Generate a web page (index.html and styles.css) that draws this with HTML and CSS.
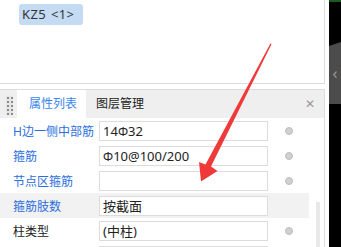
FILE: index.html
```html
<!DOCTYPE html>
<html lang="zh-CN">
  <head>
    <meta charset="UTF-8" />
    <title>属性列表</title>
    <link rel="stylesheet" href="styles.css">
  </head>
  <body>
    <div class="screen">
      <div class="main">
        <div class="canvas-area">
          <span class="tag">KZ5 &lt;1&gt;</span>
        </div>

        <div class="panel">
          <div class="panel-head">
            <div class="handle"></div>
            <div class="tab active">属性列表</div>
            <div class="tab">图层管理</div>
            <div class="close">&#x2715;</div>
          </div>

          <div class="panel-body">
            <div class="rows">
              <div class="row">
                <span class="label blue">H边一侧中部筋</span>
                <span class="field">14<span class="bar">Φ</span>32</span>
                <span class="dot"></span>
              </div>
              <div class="row">
                <span class="label blue">箍筋</span>
                <span class="field"><span class="bar">Φ</span>10@100/200</span>
                <span class="dot"></span>
              </div>
              <div class="row">
                <span class="label blue">节点区箍筋</span>
                <span class="field"></span>
                <span class="dot"></span>
              </div>
              <div class="row current">
                <span class="label blue">箍筋肢数</span>
                <span class="field">按截面</span>
                <span class="no-dot"></span>
              </div>
              <div class="row">
                <span class="label">柱类型</span>
                <span class="field">(中柱)</span>
                <span class="dot"></span>
              </div>
              <div class="row">
                <span class="label"></span>
                <span class="field"></span>
                <span class="dot"></span>
              </div>
            </div>
            <div class="scroll">
              <div class="thumb"></div>
            </div>
          </div>
        </div>
      </div>

      <div class="side">
        <div class="side-gap"></div>
        <div class="side-dark">
          <div class="side-fold">&lsaquo;</div>
        </div>
      </div>
    </div>

    <!-- red annotation arrow -->
    <svg class="arrow" width="341" height="247" viewBox="0 0 341 247">
      <polygon
        fill="#f03a3a"
        points="271.6,44 211,166.5 217.5,171 201,181.5 199,162 205.5,164.5 270.4,43.6"
      />
    </svg>
  </body>
</html>
```

FILE: styles.css
```css
body {
  margin: 0;
  padding: 0;
  font-family: "Noto Sans", "Noto Sans CJK SC", sans-serif;
  font-size: 12px;
  color: #222;
  background-color: #fff;
  overflow: hidden;
}
.screen {
  display: flex;
  width: 341px;
  height: 247px;
  overflow: hidden;
}
.main {
  width: 325px;
  display: flex;
  flex-direction: column;
}
.canvas-area {
  height: 84px;
  border-right: 1px solid #dcdcdc;
  border-bottom: 1px solid #dcdcdc;
  padding: 4px 0 0 19px;
  box-sizing: border-box;
  flex-shrink: 0;
}
.tag {
  display: inline-block;
  width: 64px;
  height: 21px;
  line-height: 21px;
  padding-left: 3px;
  box-sizing: border-box;
  background-color: #c4dbf3;
  border-radius: 3px;
  font-size: 13px;
  letter-spacing: 0.4px;
  word-spacing: 1px;
  color: #333;
  white-space: nowrap;
}
.panel {
  margin-top: 5px;
  border-top: 1px solid #dcdcdc;
  border-right: 1px solid #dcdcdc;
  flex: 1;
  display: flex;
  flex-direction: column;
}
.panel-head {
  height: 28px;
  background-color: #efefef;
  display: flex;
  align-items: stretch;
  flex-shrink: 0;
}
.handle {
  width: 17px;
  background-color: #e6e6e6;
  background-image: radial-gradient(circle, #8a8a8a 0.9px, transparent 1.2px);
  background-size: 4px 4px;
  background-repeat: repeat;
  background-position: 6px 6px;
  background-clip: content-box;
  padding: 6px 4px 3px 6px;
  box-sizing: border-box;
  flex-shrink: 0;
}
.tab {
  line-height: 28px;
  font-size: 12px;
  color: #222;
  padding: 0 10px;
  white-space: nowrap;
  flex-shrink: 0;
}
.tab.active {
  background-color: #fff;
  color: #3a86f0;
  width: 69px;
  box-sizing: border-box;
  padding: 0 0 0 12px;
}
.close {
  margin-left: auto;
  width: 28px;
  line-height: 28px;
  text-align: center;
  color: #999;
  font-size: 12px;
}
.panel-body {
  flex: 1;
  display: flex;
}
.rows {
  width: 309px;
  flex-shrink: 0;
}
.row {
  height: 25px;
  display: flex;
  align-items: center;
}
.row.current {
  background-color: #f2f2f2;
}
.label {
  width: 99px;
  padding-left: 13px;
  box-sizing: border-box;
  white-space: nowrap;
  flex-shrink: 0;
  color: #222;
}
.label.blue {
  color: #2b6ee0;
}
.field {
  width: 169px;
  height: 20px;
  line-height: 18px;
  border: 1px solid #dcdcdc;
  background-color: #fff;
  box-sizing: border-box;
  padding-left: 3px;
  font-size: 13px;
  color: #222;
  flex-shrink: 0;
  white-space: nowrap;
}
.bar {
  font-size: 12px;
}
.dot {
  width: 8px;
  height: 8px;
  border-radius: 50%;
  background-color: #d0d0d3;
  border: 1px solid #bdbdbd;
  box-sizing: border-box;
  margin-left: 17px;
  flex-shrink: 0;
}
.no-dot {
  width: 8px;
}
.scroll {
  width: 15px;
  padding: 84px 4px 0 7px;
  box-sizing: border-box;
}
.thumb {
  height: 60px;
  background-color: #e9e9e9;
}
.side {
  width: 16px;
  display: flex;
}
.side-gap {
  width: 4px;
  background-color: #fff;
}
.side-dark {
  width: 12px;
  background-color: #000;
  border-top: 2px solid #1d5a1d;
  box-sizing: border-box;
  padding-top: 40px;
}
.side-fold {
  height: 62px;
  background-color: #4c4c4c;
  color: #9a9a9a;
  font-size: 16px;
  line-height: 62px;
  text-align: center;
  clip-path: polygon(0 4px, 100% 0, 100% 100%, 0 100%);
}
.arrow {
  position: absolute;
  left: 0;
  top: 0;
  pointer-events: none;
}
```
